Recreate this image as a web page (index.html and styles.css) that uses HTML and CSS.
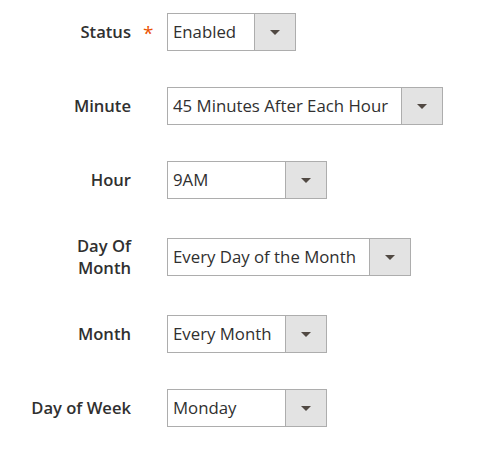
FILE: index.html
```html
<!DOCTYPE html>
<html>
<head>
<meta charset="utf-8">
<link rel="stylesheet" href="styles.css">
</head>
<body>
<div class="form">
  <div class="row">
    <div class="label required">Status</div>
    <div class="select w-status"><span class="value">Enabled</span><span class="arrow"></span></div>
  </div>
  <div class="row">
    <div class="label">Minute</div>
    <div class="select w-minute"><span class="value">45 Minutes After Each Hour</span><span class="arrow"></span></div>
  </div>
  <div class="row">
    <div class="label">Hour</div>
    <div class="select w-std"><span class="value">9AM</span><span class="arrow"></span></div>
  </div>
  <div class="row">
    <div class="label">Day Of<br>Month</div>
    <div class="select w-dom"><span class="value">Every Day of the Month</span><span class="arrow"></span></div>
  </div>
  <div class="row">
    <div class="label">Month</div>
    <div class="select w-std"><span class="value">Every Month</span><span class="arrow"></span></div>
  </div>
  <div class="row">
    <div class="label">Day of Week</div>
    <div class="select w-std"><span class="value">Monday</span><span class="arrow"></span></div>
  </div>
</div>
</body>
</html>
```
FILE: styles.css
```css
html, body {
  margin: 0;
  padding: 0;
  background: #ffffff;
}
body {
  font-family: "Open Sans", "Liberation Sans", sans-serif;
  color: #303030;
  font-size: 16.8px;
}
.form {
  display: flex;
  flex-direction: column;
  gap: 36px;
  padding-top: 13px;
}
.row {
  display: flex;
  align-items: center;
  gap: 36px;
}
.label {
  position: relative;
  width: 131px;
  text-align: right;
  font-weight: 600;
  font-size: 16.6px;
  line-height: 22px;
  color: #303030;
}
.required::after {
  content: "*";
  position: absolute;
  left: calc(100% + 12px);
  top: 1px;
  color: #eb5202;
  font-size: 19px;
  font-weight: 400;
}
.select {
  display: flex;
  height: 38px;
  box-sizing: border-box;
  border: 1px solid #adadad;
  background: #ffffff;
}
.value {
  flex: 1;
  padding-left: 5px;
  line-height: 36px;
  white-space: nowrap;
  overflow: hidden;
}
.arrow {
  width: 40px;
  flex: none;
  background: #e3e3e3;
  border-left: 1px solid #adadad;
  position: relative;
}
.arrow::after {
  content: "";
  position: absolute;
  left: 50%;
  top: 50%;
  margin-left: -5px;
  margin-top: -2px;
  border-left: 5px solid transparent;
  border-right: 5px solid transparent;
  border-top: 5px solid #514943;
}
.w-status { width: 129px; }
.w-minute { width: 276px; }
.w-std { width: 160px; }
.w-dom { width: 244px; }
```
